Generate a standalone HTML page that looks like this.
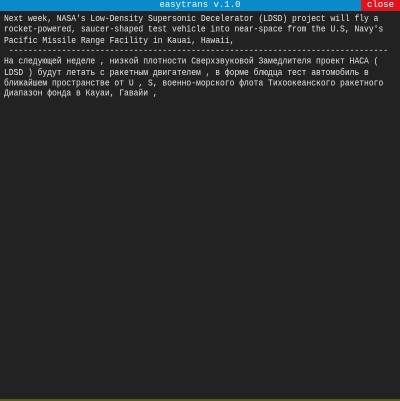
<!DOCTYPE html>
<html><head><style>
html,body{margin:0;padding:0;width:400px;height:401px;overflow:hidden;background:#5a5a20}
.win{position:absolute;left:0;top:0;width:400px;height:399px;background:#222}
.title{position:absolute;left:0;top:0;width:400px;height:11px;background:#0a8ccc;color:#e8f4ff;font:9px/11px "Liberation Mono",monospace;text-align:center}
.close{position:absolute;right:0;top:0;width:39px;height:11px;background:#e0141e;color:#fff;font:9px/11px "Liberation Mono",monospace;text-align:center}
.txt{position:absolute;left:4px;top:14px;color:#e6e6e6;font:8px/9.35px "Liberation Mono","DejaVu Sans Mono",monospace;white-space:pre;transform:scaleY(1.15);transform-origin:0 0}
</style></head><body>
<div class="win">
<div class="title">easytrans v.1.0</div>
<div class="close">close</div>
<div class="txt">Next week, NASA's Low-Density Supersonic Decelerator (LDSD) project will fly a
rocket-powered, saucer-shaped test vehicle into near-space from the U.S, Navy's
Pacific Missile Range Facility in Kauai, Hawaii,
 -------------------------------------------------------------------------------
На следующей неделе , низкой плотности Сверхзвуковой Замедлителя проект НАСА (
LDSD ) будут летать с ракетным двигателем , в форме блюдца тест автомобиль в
ближайшем пространстве от U , S, военно-морского флота Тихоокеанского ракетного
Диапазон фонда в Кауаи, Гавайи ,</div>
</div>
</body></html>
